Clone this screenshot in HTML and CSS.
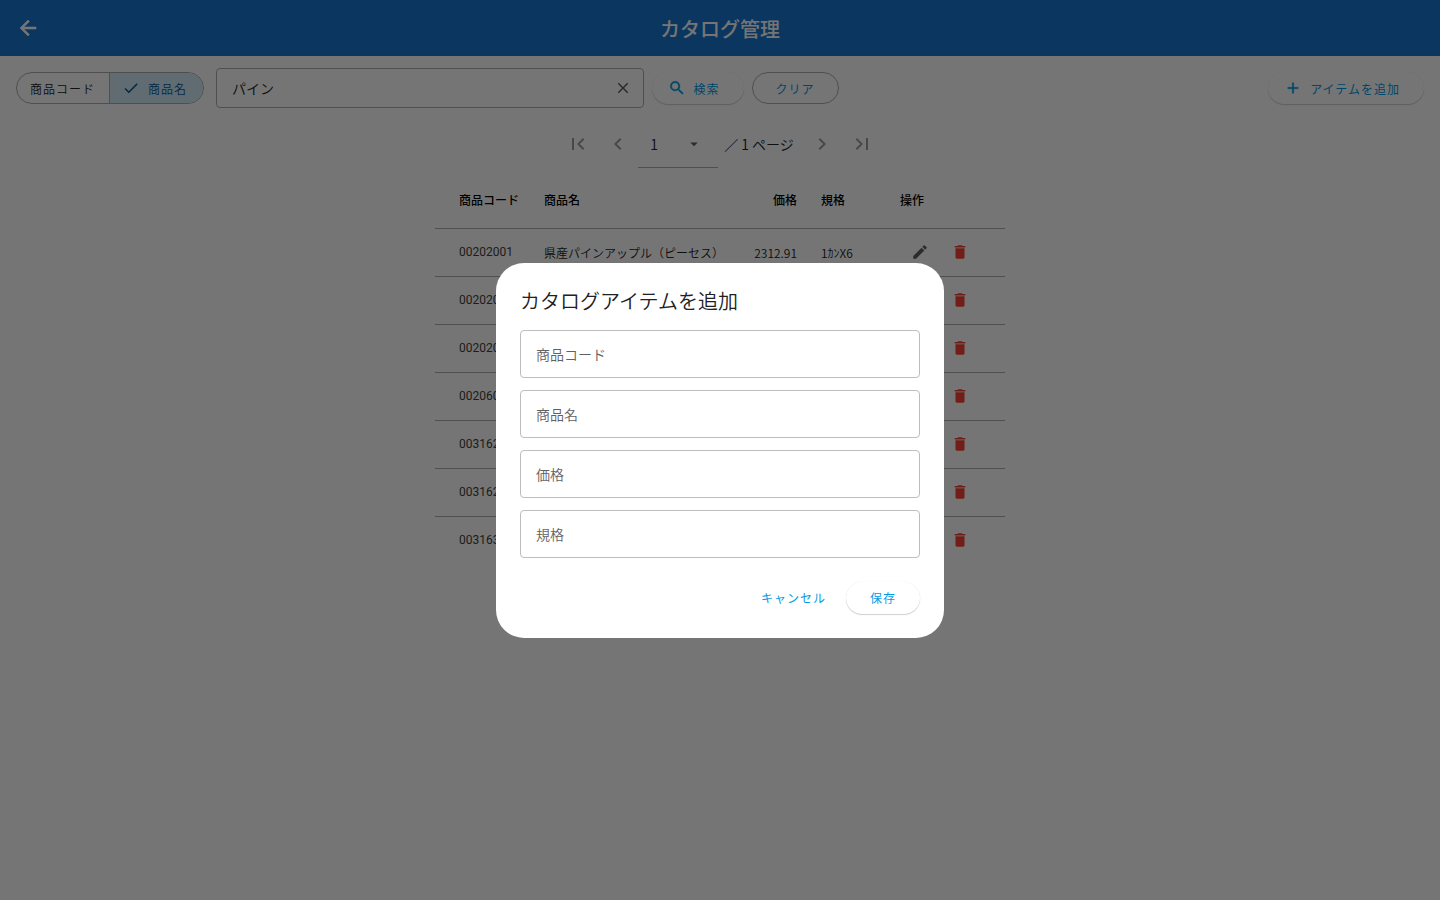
FILE: index.html
```html
<!DOCTYPE html>
<html lang="ja">
<head>
  <meta charset="UTF-8" />
  <meta name="viewport" content="width=device-width, initial-scale=1.0" />
  <title>カタログ管理</title>
  <link rel="stylesheet" href="styles.css">
</head>
<body>
  <!-- shared icons -->
  <svg class="sprite" aria-hidden="true">
    <symbol id="i-back" viewBox="0 0 24 24"><path stroke="currentColor" stroke-width=".6" d="M20 11H7.83l5.59-5.59L12 4l-8 8 8 8 1.41-1.41L7.83 13H20v-2z"/></symbol>
    <symbol id="i-check" viewBox="0 0 24 24"><path d="M9 16.17L4.83 12l-1.42 1.41L9 19 21 7l-1.41-1.41z"/></symbol>
    <symbol id="i-close" viewBox="0 0 24 24"><path d="M19 6.41L17.59 5 12 10.59 6.41 5 5 6.41 10.59 12 5 17.59 6.41 19 12 13.41 17.59 19 19 17.59 13.41 12z"/></symbol>
    <symbol id="i-search" viewBox="0 0 24 24"><path stroke="currentColor" stroke-width=".5" d="M15.5 14h-.79l-.28-.27A6.47 6.47 0 0 0 16 9.5 6.5 6.5 0 1 0 9.5 16c1.61 0 3.09-.59 4.23-1.57l.27.28v.79l5 4.99L20.49 19l-4.99-5zm-6 0C7.01 14 5 11.99 5 9.5S7.01 5 9.5 5 14 7.01 14 9.5 11.99 14 9.5 14z"/></symbol>
    <symbol id="i-add" viewBox="0 0 24 24"><path stroke="currentColor" stroke-width=".4" d="M19 13h-6v6h-2v-6H5v-2h6V5h2v6h6v2z"/></symbol>
    <symbol id="i-first" viewBox="0 0 24 24"><path d="M18.41 16.59L13.82 12l4.59-4.59L17 6l-6 6 6 6zM6 6h2v12H6z"/></symbol>
    <symbol id="i-prev" viewBox="0 0 24 24"><path d="M15.41 7.41L14 6l-6 6 6 6 1.41-1.41L10.83 12z"/></symbol>
    <symbol id="i-next" viewBox="0 0 24 24"><path d="M10 6L8.59 7.41 13.17 12l-4.58 4.59L10 18l6-6z"/></symbol>
    <symbol id="i-last" viewBox="0 0 24 24"><path d="M5.59 7.41L10.18 12l-4.59 4.59L7 18l6-6-6-6zM16 6h2v12h-2z"/></symbol>
    <symbol id="i-drop" viewBox="0 0 24 24"><path d="M7 10l5 5 5-5z"/></symbol>
    <symbol id="i-edit" viewBox="0 0 24 24"><path d="M3 17.25V21h3.75L17.81 9.94l-3.75-3.75L3 17.25zM20.71 7.04a1 1 0 0 0 0-1.41l-2.34-2.34a1 1 0 0 0-1.41 0l-1.83 1.83 3.75 3.75 1.83-1.83z"/></symbol>
    <symbol id="i-delete" viewBox="0 0 24 24"><path d="M6 19c0 1.1.9 2 2 2h8c1.1 0 2-.9 2-2V7H6v12zM19 4h-3.5l-1-1h-5l-1 1H5v2h14V4z"/></symbol>
  </svg>

  <header class="app-bar">
    <button class="icon-btn back" aria-label="戻る"><svg><use href="#i-back"/></svg></button>
    <h1>カタログ管理</h1>
  </header>

  <main>
    <form class="toolbar">
      <div class="segmented">
        <label class="segment"><input type="radio" name="target" value="code">商品コード</label>
        <label class="segment"><input type="radio" name="target" value="name" checked><svg><use href="#i-check"/></svg>商品名</label>
      </div>
      <div class="search-field">
        <input type="text" value="パイン" aria-label="検索キーワード">
        <button type="button" class="icon-btn" aria-label="入力を消去"><svg><use href="#i-close"/></svg></button>
      </div>
      <button type="button" class="btn elevated with-icon"><svg><use href="#i-search"/></svg>検索</button>
      <button type="reset" class="btn outlined">クリア</button>
      <div class="spacer"></div>
      <button type="button" class="btn elevated with-icon"><svg><use href="#i-add"/></svg>アイテムを追加</button>
    </form>

    <nav class="pager" aria-label="ページ">
      <button class="icon-btn" disabled aria-label="最初のページ"><svg><use href="#i-first"/></svg></button>
      <button class="icon-btn" disabled aria-label="前のページ"><svg><use href="#i-prev"/></svg></button>
      <div class="page-select">
        <select aria-label="ページ番号"><option>1</option></select>
        <svg><use href="#i-drop"/></svg>
      </div>
      <span class="page-total">／ 1 ページ</span>
      <button class="icon-btn" disabled aria-label="次のページ"><svg><use href="#i-next"/></svg></button>
      <button class="icon-btn" disabled aria-label="最後のページ"><svg><use href="#i-last"/></svg></button>
    </nav>

    <table class="catalog">
      <colgroup>
        <col class="col-code"><col class="col-name"><col class="col-price"><col class="col-spec"><col class="col-ops">
      </colgroup>
      <thead>
        <tr><th>商品コード</th><th>商品名</th><th class="num">価格</th><th>規格</th><th>操作</th></tr>
      </thead>
      <tbody>
        <tr>
          <td class="code">00202001</td><td>県産パインアップル（ピーセス）</td><td class="num">2312.91</td><td>1ｶﾝX6</td>
          <td><div class="ops"><button class="icon-btn" aria-label="編集"><svg><use href="#i-edit"/></svg></button><button class="icon-btn delete" aria-label="削除"><svg><use href="#i-delete"/></svg></button></div></td>
        </tr>
        <tr>
          <td class="code">002020</td><td></td><td></td><td></td>
          <td><div class="ops"><button class="icon-btn" aria-label="編集"><svg><use href="#i-edit"/></svg></button><button class="icon-btn delete" aria-label="削除"><svg><use href="#i-delete"/></svg></button></div></td>
        </tr>
        <tr>
          <td class="code">002020</td><td></td><td></td><td></td>
          <td><div class="ops"><button class="icon-btn" aria-label="編集"><svg><use href="#i-edit"/></svg></button><button class="icon-btn delete" aria-label="削除"><svg><use href="#i-delete"/></svg></button></div></td>
        </tr>
        <tr>
          <td class="code">002060</td><td></td><td></td><td></td>
          <td><div class="ops"><button class="icon-btn" aria-label="編集"><svg><use href="#i-edit"/></svg></button><button class="icon-btn delete" aria-label="削除"><svg><use href="#i-delete"/></svg></button></div></td>
        </tr>
        <tr>
          <td class="code">003162</td><td></td><td></td><td></td>
          <td><div class="ops"><button class="icon-btn" aria-label="編集"><svg><use href="#i-edit"/></svg></button><button class="icon-btn delete" aria-label="削除"><svg><use href="#i-delete"/></svg></button></div></td>
        </tr>
        <tr>
          <td class="code">003162</td><td></td><td></td><td></td>
          <td><div class="ops"><button class="icon-btn" aria-label="編集"><svg><use href="#i-edit"/></svg></button><button class="icon-btn delete" aria-label="削除"><svg><use href="#i-delete"/></svg></button></div></td>
        </tr>
        <tr>
          <td class="code">003163</td><td></td><td></td><td></td>
          <td><div class="ops"><button class="icon-btn" aria-label="編集"><svg><use href="#i-edit"/></svg></button><button class="icon-btn delete" aria-label="削除"><svg><use href="#i-delete"/></svg></button></div></td>
        </tr>
      </tbody>
    </table>
  </main>

  <div class="overlay">
    <form class="dialog" role="dialog" aria-modal="true" aria-labelledby="dialogTitle">
      <h2 id="dialogTitle">カタログアイテムを追加</h2>
      <div class="fields">
        <input type="text" placeholder="商品コード" aria-label="商品コード">
        <input type="text" placeholder="商品名" aria-label="商品名">
        <input type="text" placeholder="価格" aria-label="価格">
        <input type="text" placeholder="規格" aria-label="規格">
      </div>
      <div class="actions">
        <button type="button" class="btn text">キャンセル</button>
        <button type="button" class="btn elevated">保存</button>
      </div>
    </form>
  </div>
</body>
</html>
```

FILE: styles.css
```css
* { box-sizing: border-box; margin: 0; padding: 0; }
body {
  min-height: 100vh;
  background: #fff;
  color: #212121;
  font-family: "Noto Sans CJK JP", sans-serif;
  font-size: 14px;
  font-weight: 350;
}
button, input, select {
  font: inherit;
  color: inherit;
  border: none;
  background: none;
  outline: none;
}
button { cursor: pointer; }
svg { fill: currentColor; flex: none; }
.sprite { display: none; }

.app-bar {
  display: grid;
  grid-template-columns: 40px 1fr 40px;
  align-items: center;
  height: 56px;
  padding: 0 8px;
  background: #1976d2;
  color: #fff;
}
.app-bar h1 {
  font-size: 20px;
  font-weight: 500;
  line-height: 27px;
  text-align: center;
}
.icon-btn {
  display: flex;
  align-items: center;
  justify-content: center;
  width: 40px;
  height: 40px;
  color: #616161;
}
.icon-btn svg { width: 24px; height: 24px; }
.icon-btn:disabled { color: #9e9e9e; }
.app-bar .back { color: #fff; }

/* search bar */
.toolbar {
  display: flex;
  align-items: center;
  gap: 8px;
  padding: 12px 16px;
}
.segmented {
  display: flex;
  height: 32px;
  margin-right: 4px;
  border: 1px solid #adadad;
  border-radius: 16px;
  overflow: hidden;
}
.segment {
  display: flex;
  align-items: center;
  padding: 0 14px 0 13px;
  font-size: 12px;
  letter-spacing: 1px;
  cursor: pointer;
}
.segment input { position: absolute; opacity: 0; }
.segment svg { width: 18px; height: 18px; margin-right: 8px; }
.segment + .segment {
  padding: 0 16px 0 12px;
  border-left: 1px solid #adadad;
}
.segment:has(:checked) {
  background: #d3ecf8;
  color: #01579b;
}
.search-field {
  flex: 1;
  display: flex;
  align-items: center;
  height: 40px;
  border: 1px solid #adadad;
  border-radius: 4px;
}
.search-field input { flex: 1; min-width: 0; padding-left: 15px; }
.search-field svg { width: 18px; height: 18px; }
.spacer { flex: 1; margin: 0 -8px; padding: 0 2px; }

.btn {
  display: flex;
  align-items: center;
  height: 32px;
  padding: 0 24px;
  border-radius: 16px;
  color: #039be5;
  font-size: 12px;
  font-weight: 400;
  letter-spacing: 1px;
  white-space: nowrap;
}
.btn.with-icon { padding-left: 16px; }
.btn svg { width: 18px; height: 18px; margin-right: 8px; }
.btn.elevated {
  background: #fff;
  box-shadow: 0 1px 1px rgba(0, 0, 0, 0.18), 0 0 1px rgba(0, 0, 0, 0.1);
}
.btn.outlined { padding: 0 23px; border: 1px solid #adadad; }
.btn.text { padding: 0 12px; }

/* pager */
.pager {
  display: flex;
  align-items: center;
  justify-content: center;
  height: 48px;
}
.page-select {
  position: relative;
  width: 80px;
  height: 48px;
  border-bottom: 1px solid #adadad;
}
.page-select select {
  appearance: none;
  width: 100%;
  height: 100%;
  padding-left: 12px;
}
.page-select svg {
  position: absolute;
  top: 15px;
  right: 15px;
  width: 18px;
  height: 18px;
  color: #616161;
  pointer-events: none;
}
.page-total { padding: 0 8px 0 6px; white-space: nowrap; }

/* table */
.catalog {
  width: 570px;
  margin: 4px auto 0;
  table-layout: fixed;
  border-collapse: collapse;
  font-size: 12px;
}
.col-code { width: 85px; }
.col-name { width: 207px; }
.col-price { width: 70px; }
.col-spec { width: 79px; }
.col-ops { width: 129px; }
.catalog th, .catalog td {
  height: 48px;
  padding-left: 24px;
  text-align: left;
  white-space: nowrap;
}
.catalog th { height: 56px; color: #000; font-weight: 500; }
.catalog tbody tr { border-top: 1px solid #adadad; }
.catalog .num { text-align: right; }
.catalog .code { color: #424242; font-family: Roboto, sans-serif; font-weight: 400; }
.ops { display: flex; }
.ops svg { width: 18px; height: 18px; }
.icon-btn.delete { color: #f44336; }

/* dialog */
.overlay {
  position: fixed;
  inset: 0;
  display: flex;
  align-items: center;
  justify-content: center;
  background: rgba(0, 0, 0, 0.54);
}
.dialog {
  width: 448px;
  padding: 24px;
  border-radius: 28px;
  background: #fff;
}
.dialog h2 {
  margin-bottom: 16px;
  font-size: 20px;
  font-weight: 350;
  line-height: 27px;
}
.fields { display: grid; gap: 12px; }
.fields input {
  height: 48px;
  padding: 0 15px;
  border: 1px solid #bdbdbd;
  border-radius: 4px;
}
.fields input::placeholder { color: #616161; opacity: 1; }
.actions {
  display: flex;
  justify-content: flex-end;
  gap: 8px;
  margin-top: 24px;
}
```
